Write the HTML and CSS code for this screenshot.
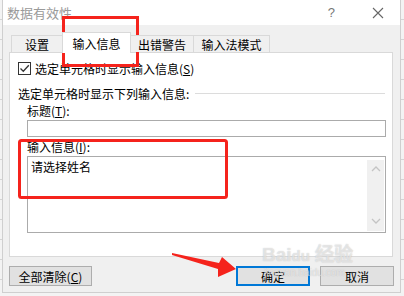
FILE: index.html
```html
<!DOCTYPE html>
<html lang="zh-CN">
<head>
  <meta charset="UTF-8" />
  <title>数据有效性</title>
  <link rel="stylesheet" href="styles.css">
</head>
<body>
  <div class="dialog">
    <!--title bar-->
    <div class="titlebar">
      <span class="title">数据有效性</span>
      <span class="help">?</span>
      <svg class="close" width="12" height="12" viewBox="0 0 12 12">
        <path d="M1 1 L11 11 M11 1 L1 11" stroke="#666" stroke-width="1.1" fill="none"/>
      </svg>
    </div>

    <div class="body">
      <div class="tabs">
        <div class="tab tab-set">设置</div>
        <div class="tab tab-input active">输入信息</div>
        <div class="tab tab-error">出错警告</div>
        <div class="tab tab-ime">输入法模式</div>
      </div>

      <div class="panel">
        <label class="check-row">
          <span class="checkbox">
            <svg width="11" height="11" viewBox="0 0 11 11">
              <path d="M1.5 5.5 L4.3 8.3 L9.8 2.3" stroke="#333" stroke-width="1.3" fill="none"/>
            </svg>
          </span>
          <span>选定单元格时显示输入信息(<u>S</u>)</span>
        </label>

        <div class="group-row">
          <span>选定单元格时显示下列输入信息:</span>
          <span class="group-line"></span>
        </div>

        <div class="field-label">标题(<u>T</u>):</div>
        <div class="text-input"></div>

        <div class="field-label">输入信息(<u>I</u>):</div>
        <div class="text-area">
          <div class="area-text">请选择姓名</div>
          <div class="scrollbar">
            <svg width="10" height="6" viewBox="0 0 10 6"><path d="M1 5 L5 1 L9 5" stroke="#c4c4c4" stroke-width="1.3" fill="none"/></svg>
            <svg width="10" height="6" viewBox="0 0 10 6"><path d="M1 1 L5 5 L9 1" stroke="#c4c4c4" stroke-width="1.3" fill="none"/></svg>
          </div>
        </div>
      </div>

      <div class="buttons">
        <button class="btn btn-clear">全部清除(<u>C</u>)</button>
        <span class="spacer"></span>
        <button class="btn btn-ok">确定</button>
        <button class="btn">取消</button>
      </div>
    </div>
  </div>

  <!--baidu watermark-->
  <div class="watermark">
    <div class="wm-big">Bai<span class="wm-du">du</span> 经验</div>
    <div class="wm-small">jingyan.baidu.com</div>
  </div>

  <!--red marks drawn over the screenshot-->
  <svg class="marks" width="404" height="296" viewBox="0 0 404 296">
    <rect x="63.5" y="17.5" width="74" height="48" fill="none" stroke="#f5231c" stroke-width="3"/>
    <rect x="19.5" y="140.5" width="207" height="57" rx="2" fill="none" stroke="#f5231c" stroke-width="3"/>
    <polygon points="172,253 219,263 222,257 236,269 218,277 218,269 172,255" fill="#f5231c"/>
  </svg>
</body>
</html>
```

FILE: styles.css
```css
body {
  margin: 0;
  width: 404px;
  height: 296px;
  overflow: hidden;
  position: relative;
  font-family: "Noto Sans CJK SC", "Noto Sans", sans-serif;
  font-size: 12px;
  color: #000;
  /* excel sheet behind the dialog */
  background: repeating-linear-gradient(to bottom, #f3f3f3 0, #f3f3f3 19px, #d4d4d4 19px, #d4d4d4 20px);
}

.dialog {
  margin-left: 2px;
  width: 397px;
  height: 292px;
  border: 1px solid #cfcfcf;
  border-top: none;
  background: #f0f0f0;
  display: flex;
  flex-direction: column;
}

.titlebar {
  height: 25px;
  background: #fff;
  display: flex;
  align-items: center;
  padding-left: 4px;
}

.title {
  color: #9a9a9a;
  font-size: 13px;
  flex: 1;
}

.help {
  color: #777;
  font-size: 13px;
  font-family: "Liberation Sans", sans-serif;
  margin-right: 37px;
}

.close {
  margin-right: 16px;
}

.body {
  flex: 1;
  display: flex;
  flex-direction: column;
  padding: 7px 6px 0 6px;
}

.tabs {
  display: flex;
  align-items: flex-end;
  height: 20px;
  padding-left: 2px;
  position: relative;
  z-index: 1;
}

.tab {
  height: 17px;
  line-height: 17px;
  text-align: center;
  border: 1px solid #d9d9d9;
  border-bottom: none;
  box-sizing: border-box;
  background: #f0f0f0;
}

.tab.active {
  height: 21px;
  line-height: 21px;
  background: #fff;
  margin-bottom: -1px;
}

.tab-set { width: 51px; border-right: none; }
.tab-input { width: 69px; }
.tab-error { width: 63px; border-left: none; }
.tab-ime { width: 76px; border-left: none; }

.panel {
  width: 384px;
  height: 205px;
  box-sizing: border-box;
  background: #fff;
  border: 1px solid #d9d9d9;
  padding: 7px 6px 0 8px;
  display: flex;
  flex-direction: column;
}

.check-row {
  display: flex;
  align-items: center;
  height: 16px;
  gap: 4px;
}

.checkbox {
  width: 13px;
  height: 13px;
  box-sizing: border-box;
  border: 1px solid #333;
  display: flex;
  align-items: center;
  justify-content: center;
}

u {
  text-decoration: underline;
  text-underline-offset: 1px;
}

.group-row {
  display: flex;
  align-items: center;
  height: 16px;
  margin-top: 9px;
}

.group-line {
  flex: 1;
  height: 1px;
  background: #dcdcdc;
  margin: 0 1px 0 6px;
}

.field-label {
  height: 16px;
  line-height: 16px;
  margin: 2px 0 1px 9px;
}

.text-input {
  margin-left: 9px;
  height: 17px;
  box-sizing: border-box;
  border: 1px solid #ababab;
}

.text-area {
  margin-left: 9px;
  height: 77px;
  box-sizing: border-box;
  border: 1px solid #ababab;
  display: flex;
}

.area-text {
  flex: 1;
  padding: 2px 0 0 3px;
  line-height: 16px;
}

.scrollbar {
  width: 17px;
  margin: 3px 1px 1px 0;
  background: #f0f0f0;
  display: flex;
  flex-direction: column;
  justify-content: space-between;
  align-items: center;
  padding: 6px 0 7px;
}

.buttons {
  display: flex;
  gap: 10px;
  margin-top: 9px;
  padding-right: 0;
}

.spacer {
  flex: 1;
}

.btn {
  height: 20px;
  width: 74px;
  padding: 0;
  font-family: "Noto Sans CJK SC", "Noto Sans", sans-serif;
  font-size: 12px;
  color: #000;
  background: #e1e1e1;
  border: 1px solid #adadad;
}

.btn-clear {
  width: 83px;
}

.btn-ok {
  border: 2px solid #0078d7;
}

.watermark {
  position: absolute;
  left: 262px;
  top: 244px;
  color: rgba(255, 255, 255, 0.55);
  text-shadow: 0 0 1px rgba(150, 150, 150, 0.6);
  font-family: "Liberation Sans", sans-serif;
  pointer-events: none;
}

.wm-big {
  font-size: 19px;
  font-weight: bold;
  line-height: 22px;
}

.wm-du {
  font-size: 15px;
}

.wm-small {
  font-size: 10px;
  line-height: 12px;
  padding-left: 2px;
}

.marks {
  position: absolute;
  left: 0;
  top: 0;
  pointer-events: none;
}
```
